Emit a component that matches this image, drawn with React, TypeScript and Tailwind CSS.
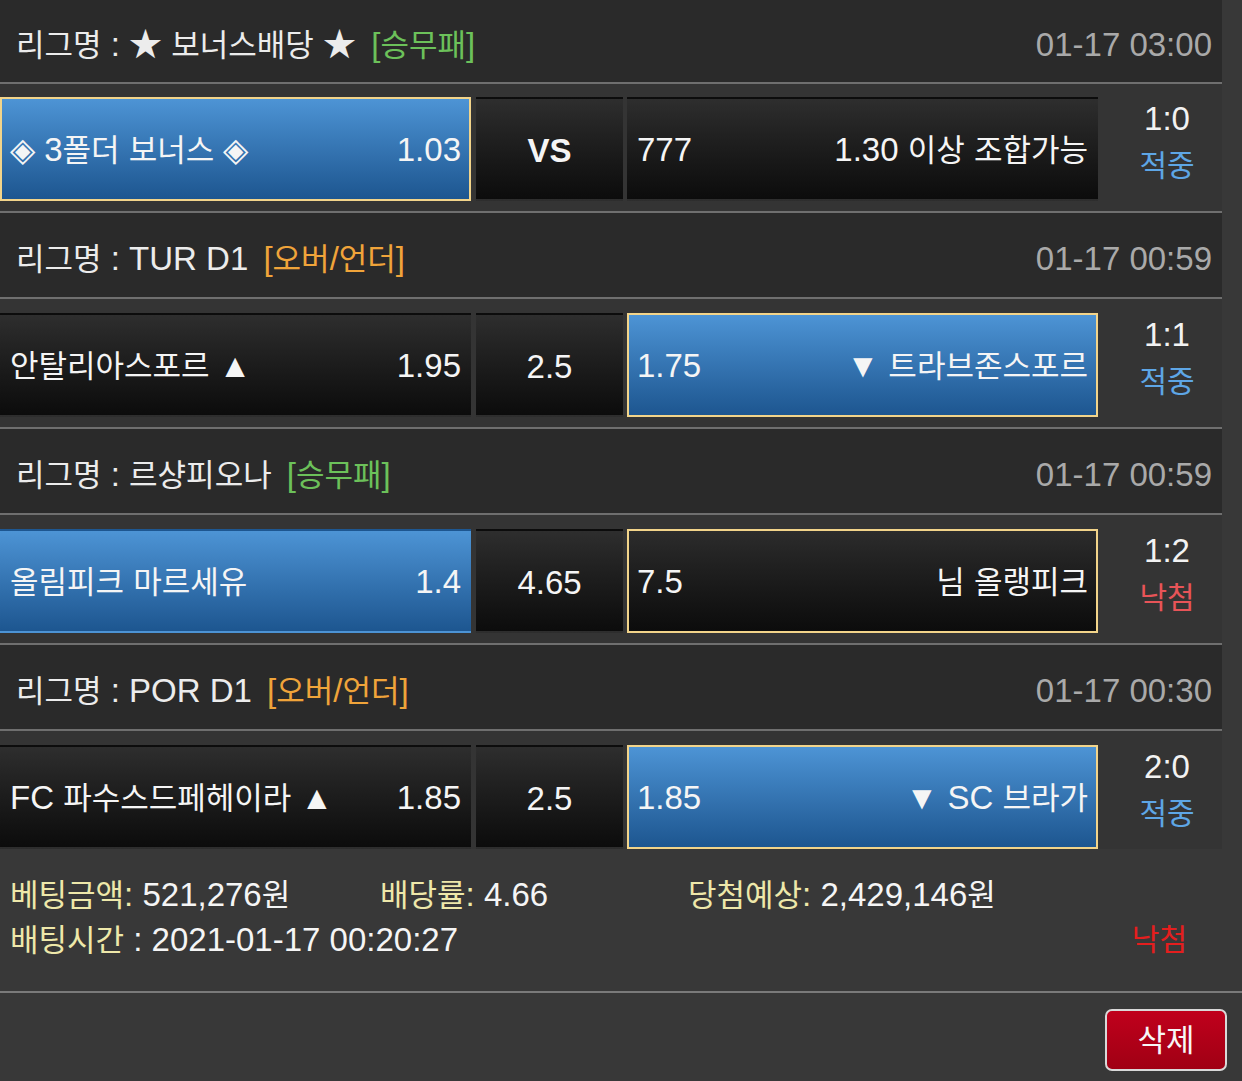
import React from "react";

type CellStyle = "blueBorder" | "blue" | "darkBorder" | "dark";

interface Match {
  league: string;
  type: string;
  typeColor: string;
  time: string;
  leftText: string;
  leftOdds: string;
  leftStyle: CellStyle;
  mid: string;
  midBold?: boolean;
  rightOdds: string;
  rightText: string;
  rightStyle: CellStyle;
  score: string;
  result: string;
  win: boolean;
}

const matches: Match[] = [
  {
    league: "★ 보너스배당 ★",
    type: "[승무패]",
    typeColor: "green",
    time: "01-17 03:00",
    leftText: "◈ 3폴더 보너스 ◈",
    leftOdds: "1.03",
    leftStyle: "blueBorder",
    mid: "VS",
    midBold: true,
    rightOdds: "777",
    rightText: "1.30 이상 조합가능",
    rightStyle: "dark",
    score: "1:0",
    result: "적중",
    win: true,
  },
  {
    league: "TUR D1",
    type: "[오버/언더]",
    typeColor: "orange",
    time: "01-17 00:59",
    leftText: "안탈리아스포르 ▲",
    leftOdds: "1.95",
    leftStyle: "dark",
    mid: "2.5",
    rightOdds: "1.75",
    rightText: "▼ 트라브존스포르",
    rightStyle: "blueBorder",
    score: "1:1",
    result: "적중",
    win: true,
  },
  {
    league: "르샹피오나",
    type: "[승무패]",
    typeColor: "green",
    time: "01-17 00:59",
    leftText: "올림피크 마르세유",
    leftOdds: "1.4",
    leftStyle: "blue",
    mid: "4.65",
    rightOdds: "7.5",
    rightText: "님 올랭피크",
    rightStyle: "darkBorder",
    score: "1:2",
    result: "낙첨",
    win: false,
  },
  {
    league: "POR D1",
    type: "[오버/언더]",
    typeColor: "orange",
    time: "01-17 00:30",
    leftText: "FC 파수스드페헤이라 ▲",
    leftOdds: "1.85",
    leftStyle: "dark",
    mid: "2.5",
    rightOdds: "1.85",
    rightText: "▼ SC 브라가",
    rightStyle: "blueBorder",
    score: "2:0",
    result: "적중",
    win: true,
  },
];

// Renders Hangul runs at a slightly smaller size so their width matches the narrower Korean face of the reference.
function T({ s }: { s: string }) {
  const parts = s.split(/([\uAC00-\uD7A3]+)/);
  return (
    <>
      {parts.map((p, i) =>
        /[\uAC00-\uD7A3]/.test(p) ? (
          <span key={i} className="text-[31px]">
            {p}
          </span>
        ) : (
          <React.Fragment key={i}>{p}</React.Fragment>
        )
      )}
    </>
  );
}

function cellClass(s: CellStyle): string {
  switch (s) {
    case "blueBorder":
      return "bg-linear-to-b from-[#4d94d5] to-[#1d5690] border-2 border-[#f2d48a]";
    case "blue":
      return "bg-linear-to-b from-[#4d94d5] to-[#1d5690] border-2 border-transparent";
    case "darkBorder":
      return "bg-linear-to-b from-[#2c2c2c] to-[#0c0c0c] border-2 border-[#f2d48a]";
    default:
      return "bg-linear-to-b from-[#2e2e2e] to-[#0c0c0c] border-2 border-transparent";
  }
}

function Header({ m, first }: { m: Match; first: boolean }) {
  return (
    <div
      className={`${first ? "h-[84px]" : "h-[86px]"} bg-[#2a2a2a] border-b-2 border-[#6f6f6f] flex items-center justify-between pl-[16px] pr-[10px] pt-[6px]`}
    >
      <div className="text-[#ececec] whitespace-nowrap">
        <T s={`리그명 : ${m.league}`} />{" "}
        <span
          className={`ml-[6px] ${m.typeColor === "green" ? "text-[#6cc15a]" : "text-[#f0a43a]"}`}
        >
          <T s={m.type} />
        </span>
      </div>
      <div className="text-[#a9a9a9] whitespace-nowrap">{m.time}</div>
    </div>
  );
}

function Row({ m, first, last }: { m: Match; first: boolean; last: boolean }) {
  const pad = first ? "pt-[13px]" : "pt-[14px]";
  const bottom = last ? "pb-0" : "pb-[10px] border-b-2 border-[#6f6f6f]";
  return (
    <div className={`bg-[#343434] flex items-start ${pad} ${bottom}`}>
      <div
        className={`w-[471px] h-[104px] shrink-0 flex items-center justify-between px-[8px] text-[#f5f5f5] whitespace-nowrap ${cellClass(m.leftStyle)}`}
      >
        <span>
          <T s={m.leftText} />
        </span>
        <span>{m.leftOdds}</span>
      </div>
      <div
        className={`ml-[5px] w-[147px] h-[104px] shrink-0 flex items-center justify-center pt-[3px] text-[#f5f5f5] ${cellClass("dark")} ${m.midBold ? "font-bold" : ""}`}
      >
        {m.mid}
      </div>
      <div
        className={`ml-[4px] w-[471px] h-[104px] shrink-0 flex items-center justify-between px-[8px] text-[#f5f5f5] whitespace-nowrap ${cellClass(m.rightStyle)}`}
      >
        <span>{m.rightOdds}</span>
        <span>
          <T s={m.rightText} />
        </span>
      </div>
      <div className="flex-1 h-[104px] pl-[14px] flex flex-col items-center justify-center pb-[14px] leading-[47px]">
        <span className="text-[#f2f2f2]">{m.score}</span>
        <span className={`text-[30px] ${m.win ? "text-[#5ea6e6]" : "text-[#e85458]"}`}>{m.result}</span>
      </div>
    </div>
  );
}

export default function App() {
  return (
    <div
      className="w-[1242px] h-[1081px] bg-[#383838] overflow-hidden text-[33px] leading-none"
      style={{ fontFamily: "'Liberation Sans', 'Noto Sans CJK KR', sans-serif" }}
    >
      <div className="w-[1222px]">
        {matches.map((m, i) => (
          <div key={i}>
            <Header m={m} first={i === 0} />
            <Row m={m} first={i === 0} last={i === matches.length - 1} />
          </div>
        ))}
      </div>
      <div className="pt-[23px] pb-[29px] pl-[10px] border-b-2 border-[#7a7a7a] leading-[45px]">
        <div className="flex whitespace-nowrap h-[45px]">
          <div className="w-[370px]">
            <span className="text-[#eee8aa]">
              <T s="베팅금액:" />
            </span>
            <span className="text-[#f5f5f5]">
              <T s=" 521,276원" />
            </span>
          </div>
          <div className="w-[308px]">
            <span className="text-[#eee8aa]">
              <T s="배당률:" />
            </span>
            <span className="text-[#f5f5f5]"> 4.66</span>
          </div>
          <div>
            <span className="text-[#eee8aa]">
              <T s="당첨예상:" />
            </span>
            <span className="text-[#f5f5f5]">
              <T s=" 2,429,146원" />
            </span>
          </div>
        </div>
        <div className="flex justify-between whitespace-nowrap pr-[55px] h-[45px]">
          <div>
            <span className="text-[#eee8aa]">
              <T s="배팅시간" />
            </span>
            <span className="text-[#f5f5f5]"> : 2021-01-17 00:20:27</span>
          </div>
          <span className="text-[#e51e1e] text-[30px]">낙첨</span>
        </div>
      </div>
      <div className="flex justify-end pt-[16px] pr-[15px]">
        <button className="w-[122px] h-[62px] rounded-[7px] border-2 border-[#d9d9d9] bg-linear-to-b from-[#c0001c] to-[#a00014] text-[#f7f7f7] text-[31px] flex items-center justify-center">
          삭제
        </button>
      </div>
    </div>
  );
}
